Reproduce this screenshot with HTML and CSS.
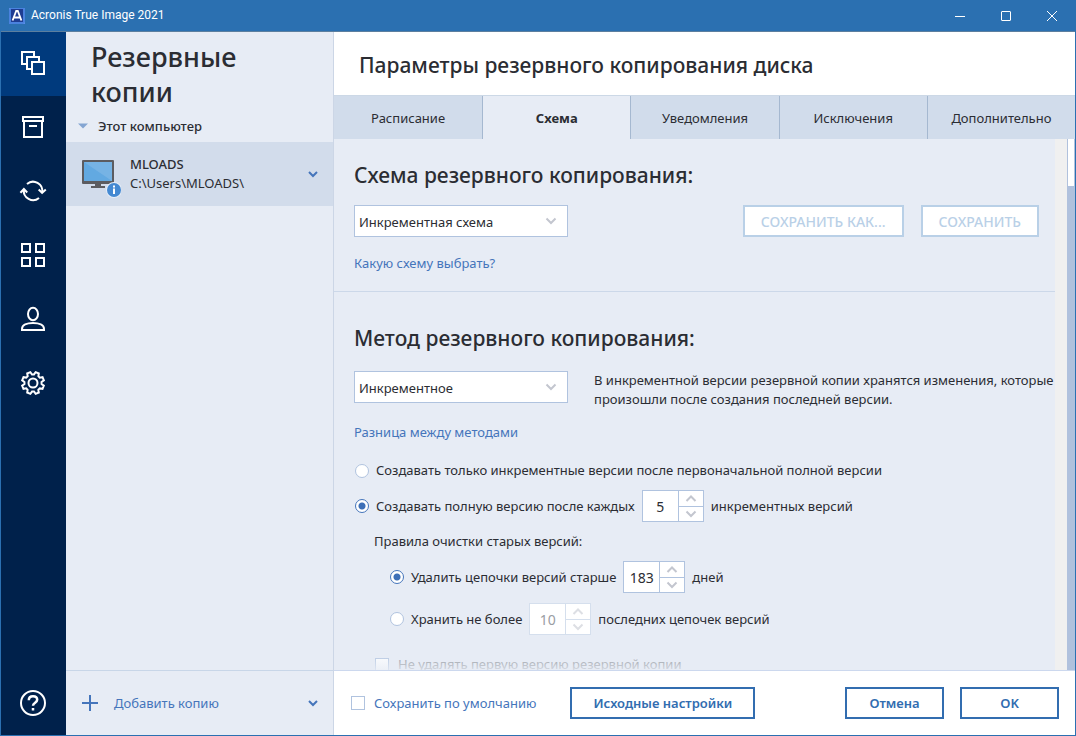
FILE: index.html
```html
<!DOCTYPE html>
<html lang="ru">
<head>
<meta charset="utf-8">
<title>Acronis True Image 2021</title>
<link rel="stylesheet" href="styles.css">
</head>
<body>
<div class="window">
  <header class="titlebar">
    <svg class="app-logo" width="16" height="16" viewBox="0 0 16 16" aria-hidden="true">
      <rect width="16" height="16" fill="#5b8fe8"/>
      <path d="M2 0H16V14L14 16H0V2Z" fill="#4a82de"/>
      <rect x="2" y="1" width="12" height="13" fill="#1f3d92"/>
      <path d="M3.6 12.5 7.2 3h1.6l3.6 9.500M5.200 9.500h5.600" fill="none" stroke="#fff" stroke-width="1.800"/>
    </svg>
    <span class="app-name">Acronis True Image 2021</span>
    <div class="window-controls">
      <button class="window-button" type="button" aria-label="Свернуть"><svg width="12" height="12" viewBox="0 0 12 12"><path d="M1 6.500h10"/></svg></button>
      <button class="window-button" type="button" aria-label="Развернуть"><svg width="12" height="12" viewBox="0 0 12 12"><rect x="1.500" y="1.500" width="9" height="9" rx="0.500"/></svg></button>
      <button class="window-button" type="button" aria-label="Закрыть"><svg width="12" height="12" viewBox="0 0 12 12"><path d="m1 1 10 10M11 1 1 11"/></svg></button>
    </div>
  </header>

  <div class="workspace">
    <nav class="rail" aria-label="Разделы">
      <button class="rail-button rail-button-active" type="button" aria-label="Резервные копии"><svg width="28" height="28" viewBox="0 0 28 28"><path d="M8 15H3V3h12v5M13 20H8V8h12v5M13 13h12v12H13z"/></svg></button>
      <button class="rail-button" type="button" aria-label="Архив"><svg width="28" height="28" viewBox="0 0 28 28"><path d="M4 4h20v4H4zM5 8v16h18V8M10 13h8"/></svg></button>
      <button class="rail-button" type="button" aria-label="Синхронизация"><svg width="28" height="28" viewBox="0 0 28 28"><path d="M8 7a9.300 9.300 0 0 1 15.200 8.500M19.700 12.500l3.400 3.400 3.700-3.400M20 21A9.300 9.300 0 0 1 4.900 12.500M1.400 15.700l3.500-3.700L8.200 15.500"/></svg></button>
      <button class="rail-button" type="button" aria-label="Инструменты"><svg width="28" height="28" viewBox="0 0 28 28"><path d="M3 3h8v8H3zM17 3h8v8h-8zM3 17h8v8H3zM17 17h8v8h-8z"/></svg></button>
      <button class="rail-button" type="button" aria-label="Учетная запись"><svg width="28" height="28" viewBox="0 0 28 28"><ellipse cx="14" cy="9" rx="5" ry="6.200"/><path d="M3 25v-1c0-4 5-6 11-6s11 2 11 6v1z"/></svg></button>
      <button class="rail-button" type="button" aria-label="Настройки"><svg width="28" height="28" viewBox="0 0 28 28"><circle cx="14" cy="14" r="4.500"/><path transform="rotate(22.5 14 14)" d="M12.300 3h3.400l.7 2.700 1.800.8 2.400-1.500 2.400 2.400-1.500 2.400.8 1.800 2.700.7v3.400l-2.700.7-.8 1.800 1.500 2.400-2.400 2.400-2.400-1.500-1.800.8-.7 2.700h-3.400l-.7-2.700-1.800-.8-2.400 1.500L5 20.600l1.500-2.400-.8-1.800-2.700-.7v-3.400l2.700-.7.8-1.800L5 7.400 7.400 5l2.400 1.500 1.800-.8z"/></svg></button>
      <button class="rail-button rail-help" type="button" aria-label="Справка"><svg width="28" height="28" viewBox="0 0 28 28"><circle cx="14" cy="14" r="12"/><path stroke-width="2.500" d="M9.800 11.200c0-2.400 1.700-3.900 4.200-3.900s4.200 1.400 4.200 3.500c0 2.900-4.200 2.900-4.200 5.900M14 19v2.500"/></svg></button>
    </nav>

    <aside class="sidebar">
      <h1 class="sidebar-title">Резервные копии</h1>
      <button class="group-toggle" type="button"><svg width="10" height="6" viewBox="0 0 10 6"><path d="M0 .5h10L5 5.500z" fill="#84a5d2"/></svg>Этот компьютер</button>
      <button class="backup-item" type="button">
        <svg class="backup-icon" width="40" height="48" viewBox="0 -8 40 48" aria-hidden="true">
          <path d="M14 25h6v3h4v2H10v-2h4z" fill="#5c5c60"/>
          <rect x="1" y="2" width="32" height="24" rx="1" fill="#5c5c60"/>
          <rect x="3" y="4" width="28" height="19" fill="#62a9e1"/>
          <path d="M3 4h28v19z" fill="#76b3e4"/>
          <circle cx="33" cy="32" r="8" fill="#e5edf8"/>
          <circle cx="33" cy="32" r="7" fill="#4489d2"/>
          <path d="M32 30.500h2V36h-2zM32 27.500h2v2h-2z" fill="#fff"/>
        </svg>
        <span class="backup-text"><span class="backup-name">MLOADS</span><span>C:\Users\MLOADS\</span></span>
        <svg class="chevron-blue" width="10" height="7" viewBox="0 0 10 7"><path d="m1 1 4 4 4-4"/></svg>
      </button>
      <button class="add-backup" type="button">
        <svg class="plus" width="16" height="16" viewBox="0 0 16 16"><path d="M8 0v16M0 8h16"/></svg>
        <span>Добавить копию</span>
        <svg class="chevron-blue" width="10" height="7" viewBox="0 0 10 7"><path d="m1 1 4 4 4-4"/></svg>
      </button>
    </aside>

    <main class="main">
      <h2 class="page-title">Параметры резервного копирования диска</h2>
      <div class="tabs" role="tablist">
        <button class="tab" type="button" role="tab">Расписание</button>
        <button class="tab tab-active" type="button" role="tab" aria-selected="true">Схема</button>
        <button class="tab" type="button" role="tab">Уведомления</button>
        <button class="tab" type="button" role="tab">Исключения</button>
        <button class="tab" type="button" role="tab">Дополнительно</button>
      </div>

      <div class="scroll-area">
        <div class="scroll-content">
          <section class="section scheme">
            <h3 class="section-title" id="scheme-title">Схема резервного копирования:</h3>
            <div class="control-row">
              <div class="select-box">
                <select class="select" aria-labelledby="scheme-title"><option>Инкрементная схема</option></select>
                <svg class="select-chevron" width="12" height="8" viewBox="0 0 12 8"><path d="m1.500 1.500 4.500 4.500 4.500-4.500"/></svg>
              </div>
              <div class="scheme-actions">
                <button class="button" type="button" disabled>СОХРАНИТЬ КАК...</button>
                <button class="button" type="button" disabled>СОХРАНИТЬ</button>
              </div>
            </div>
            <a class="help-link" href="#scheme">Какую схему выбрать?</a>
          </section>

          <section class="section method">
            <h3 class="section-title" id="method-title">Метод резервного копирования:</h3>
            <div class="control-row">
              <div class="select-box">
                <select class="select" aria-labelledby="method-title"><option>Инкрементное</option></select>
                <svg class="select-chevron" width="12" height="8" viewBox="0 0 12 8"><path d="m1.500 1.500 4.500 4.500 4.500-4.500"/></svg>
              </div>
              <p class="method-note">В инкрементной версии резервной копии хранятся изменения, которые произошли после создания последней версии.</p>
            </div>
            <a class="help-link" href="#methods">Разница между методами</a>
            <div class="options">
              <div class="option">
                <input class="radio" type="radio" name="method" id="only-incremental">
                <label for="only-incremental">Создавать только инкрементные версии после первоначальной полной версии</label>
              </div>
              <div class="option">
                <input class="radio" type="radio" name="method" id="full-after" checked>
                <label for="full-after">Создавать полную версию после каждых</label>
                <div class="spinner">
                  <input class="spinner-value" type="text" value="5" aria-label="Количество инкрементных версий">
                  <div class="spinner-buttons">
                    <button class="spinner-button" type="button" aria-label="Больше"><svg width="12" height="8" viewBox="0 0 12 8"><path d="m1.500 6 4.500-4.500L10.500 6"/></svg></button>
                    <button class="spinner-button" type="button" aria-label="Меньше"><svg width="12" height="8" viewBox="0 0 12 8"><path d="m1.500 1.500 4.500 4.500 4.500-4.500"/></svg></button>
                  </div>
                </div>
                <span>инкрементных версий</span>
              </div>
              <p class="rules-title">Правила очистки старых версий:</p>
              <div class="option option-nested">
                <input class="radio" type="radio" name="cleanup" id="older-than" checked>
                <label for="older-than">Удалить цепочки версий старше</label>
                <div class="spinner">
                  <input class="spinner-value" type="text" value="183" aria-label="Количество дней">
                  <div class="spinner-buttons">
                    <button class="spinner-button" type="button" aria-label="Больше"><svg width="12" height="8" viewBox="0 0 12 8"><path d="m1.500 6 4.500-4.500L10.500 6"/></svg></button>
                    <button class="spinner-button" type="button" aria-label="Меньше"><svg width="12" height="8" viewBox="0 0 12 8"><path d="m1.500 1.500 4.500 4.500 4.500-4.500"/></svg></button>
                  </div>
                </div>
                <span>дней</span>
              </div>
              <div class="option option-nested">
                <input class="radio" type="radio" name="cleanup" id="no-more-than">
                <label for="no-more-than">Хранить не более</label>
                <div class="spinner spinner-disabled">
                  <input class="spinner-value" type="text" value="10" aria-label="Количество цепочек" disabled>
                  <div class="spinner-buttons">
                    <button class="spinner-button" type="button" aria-label="Больше" disabled><svg width="12" height="8" viewBox="0 0 12 8"><path d="m1.500 6 4.500-4.500L10.500 6"/></svg></button>
                    <button class="spinner-button" type="button" aria-label="Меньше" disabled><svg width="12" height="8" viewBox="0 0 12 8"><path d="m1.500 1.500 4.500 4.500 4.500-4.500"/></svg></button>
                  </div>
                </div>
                <span>последних цепочек версий</span>
              </div>
              <div class="option option-keep-first">
                <input class="checkbox" type="checkbox" id="keep-first" disabled>
                <label for="keep-first">Не удалять первую версию резервной копии</label>
              </div>
            </div>
          </section>
          <div class="fade"></div>
        </div>
        <div class="scroll-gutter"></div>
        <div class="scroll-track"><div class="scroll-thumb"></div></div>
      </div>

      <footer class="footer">
        <div class="option default-option">
          <input class="checkbox" type="checkbox" id="save-default">
          <label for="save-default">Сохранить по умолчанию</label>
        </div>
        <button class="button button-reset" type="button">Исходные настройки</button>
        <div class="footer-actions">
          <button class="button" type="button">Отмена</button>
          <button class="button" type="button">OK</button>
        </div>
      </footer>
    </main>
  </div>
</div>
</body>
</html>
```

FILE: styles.css
```css
* {
  box-sizing: border-box;
}

body {
  margin: 0;
  color: #2b2d33;
  font: 13px/19px "Noto Sans", "Open Sans", sans-serif;
}

h1, h2, h3, p {
  margin: 0;
}

h1, h2, h3 {
  font-weight: 500;
}

button, input, select {
  margin: 0;
  padding: 0;
  border: 0;
  border-radius: 0;
  background: none;
  color: inherit;
  font: inherit;
}

svg {
  display: block;
  flex: none;
}

.window {
  display: flex;
  flex-direction: column;
  height: 100vh;
  border: solid #2b70b1;
  border-width: 0 1px 1px;
  background: #fff;
}

/* Title bar */

.titlebar {
  display: flex;
  flex: none;
  align-items: center;
  gap: 6px;
  height: 32px;
  padding-left: 8px;
  border-bottom: 1px solid #5c7f9f;
  background: #2b70b1;
  color: #fff;
  font-family: Roboto, "Noto Sans", sans-serif;
  font-size: 12px;
}

.window-controls {
  display: flex;
  align-self: stretch;
  margin-left: auto;
}

.window-button {
  display: grid;
  place-items: center;
  width: 46px;
}

.window-button svg {
  fill: none;
  stroke: #fff;
}

.workspace {
  display: flex;
  flex: 1;
  min-height: 0;
}

/* Section rail */

.rail {
  display: flex;
  flex: none;
  flex-direction: column;
  width: 65px;
  background: #00214b;
}

.rail-button {
  display: grid;
  place-items: center;
  flex: none;
  height: 64px;
  padding: 0 1px 2px 0;
}

.rail-button-active {
  background: #003a7d;
}

.rail-button svg {
  fill: none;
  stroke: #fff;
  stroke-width: 2;
}

.rail-help {
  margin-top: auto;
  padding-bottom: 0;
}

/* Backup list */

.sidebar {
  display: flex;
  flex: none;
  flex-direction: column;
  width: 268px;
  border-right: 1px solid #ccd6e6;
  background: #e7ecf5;
}

.sidebar-title {
  padding: 7px 25px 0;
  font-size: 27px;
  line-height: 35px;
}

.group-toggle {
  display: flex;
  align-items: center;
  gap: 10px;
  height: 33px;
  padding: 1px 12px 0;
  font-weight: 500;
}

.backup-item {
  display: flex;
  align-items: center;
  gap: 9px;
  height: 64px;
  padding: 0 15px;
  background: #d2dceb;
  text-align: left;
}

.backup-text {
  display: flex;
  flex: 1;
  flex-direction: column;
}

.backup-name {
  font-weight: 500;
}

.chevron-blue {
  fill: none;
  stroke: #4575bb;
  stroke-width: 2;
}

.add-backup {
  display: flex;
  align-items: center;
  gap: 16px;
  height: 65px;
  margin-top: auto;
  padding: 0 15px 0 16px;
  border-top: 1px solid #c8d6e8;
  color: #4575bb;
}

.add-backup span {
  flex: 1;
  text-align: left;
}

.plus {
  stroke: #4575bb;
  stroke-width: 2;
}

/* Settings */

.main {
  display: flex;
  flex: 1;
  flex-direction: column;
  min-width: 0;
}

.page-title {
  flex: none;
  padding: 17px 25px 14px;
  font-size: 21px;
  line-height: 32px;
}

.tabs {
  display: grid;
  flex: none;
  grid-template-columns: repeat(5, 1fr);
  height: 44px;
  border-top: 1px solid #ccd8e6;
  background: #e7ecf5;
}

.tab {
  padding-top: 2px;
  background: #d1dceb;
}

.tab + .tab {
  border-left: 1px solid #a5b8d0;
}

.tab-active {
  background: #e7ecf5;
  font-weight: 700;
}

.scroll-area {
  display: flex;
  flex: 1;
  min-height: 0;
}

.scroll-content {
  position: relative;
  flex: 1;
  min-width: 0;
  overflow: hidden;
  background: #e7ecf5;
}

.scroll-gutter {
  width: 12px;
  background: #f0f0f0;
}

.scroll-track {
  width: 8px;
  padding: 0 1px;
  background: #b0c1dd;
}

.scroll-thumb {
  height: 47px;
  background: #fff;
}

.fade {
  position: absolute;
  right: 0;
  bottom: 0;
  left: 0;
  height: 18px;
  background: linear-gradient(rgba(231, 236, 245, 0), rgba(231, 236, 245, 0.8));
}

.section {
  padding-left: 20px;
}

.scheme {
  padding-top: 20px;
  padding-bottom: 18px;
  border-bottom: 1px solid #ccd8e9;
}

.method {
  padding-top: 30px;
}

.section-title {
  margin-bottom: 14px;
  font-size: 21px;
  line-height: 32px;
}

.method .section-title {
  margin-bottom: 17px;
}

.control-row {
  display: flex;
  gap: 26px;
  height: 32px;
}

.select-box {
  position: relative;
  flex: none;
  width: 214px;
}

.select {
  width: 100%;
  height: 32px;
  padding: 2px 30px 0 4px;
  border: 1px solid #b0c3df;
  background: #fff;
  appearance: none;
}

.select-chevron {
  position: absolute;
  top: 12px;
  right: 11px;
  fill: none;
  stroke: #c3c6cf;
  stroke-width: 2;
}

.scheme-actions {
  display: flex;
  gap: 17px;
  margin-left: auto;
  padding-right: 16px;
}

.button {
  height: 32px;
  padding: 0 16px;
  border: 2px solid #326db0;
  background: #fff;
  color: #326db0;
  font-weight: 600;
}

.button:disabled {
  border-color: #b9d0e7;
  color: #b9d0e7;
  font-size: 14px;
  font-weight: 500;
}

.help-link {
  display: block;
  width: fit-content;
  margin-top: 17px;
  color: #4575bb;
  text-decoration: none;
}

.method .help-link {
  margin-top: 20px;
}

.options {
  display: flex;
  flex-direction: column;
  gap: 10px;
  margin-top: 19px;
}

.option {
  display: flex;
  align-items: center;
  gap: 7px;
  white-space: nowrap;
}

.option-nested {
  padding-left: 36px;
}

.rules-title {
  padding-left: 20px;
}

.option-keep-first {
  gap: 9px;
  margin-top: 10px;
  padding-left: 21px;
  color: #85898f;
}

.radio,
.checkbox {
  flex: none;
  width: 14px;
  height: 14px;
  border: 1px solid #b0c3df;
  background: #fff;
  appearance: none;
}

.radio {
  margin-left: 1px;
  border-radius: 50%;
}

.option-nested .radio {
  margin-left: 0;
}

.radio:checked {
  border: 1px solid #4575bb;
  background: radial-gradient(circle, #3d6fb7 3px, #fff 4px);
}

.spinner {
  display: flex;
  flex: none;
  width: 62px;
  height: 32px;
  border: 1px solid #b0c3df;
  background: #fff;
}

.spinner-value {
  width: 35px;
  font-size: 14px;
  text-align: center;
}

.spinner-buttons {
  display: grid;
  flex: 1;
  grid-template-rows: 1fr 1fr;
  border-left: 1px solid #b0c3df;
}

.spinner-button {
  display: grid;
  place-items: center;
}

.spinner-button + .spinner-button {
  border-top: 1px solid #b0c3df;
}

.spinner-button svg {
  fill: none;
  stroke: #c3c6cf;
  stroke-width: 2;
}

.spinner-disabled,
.spinner-disabled .spinner-buttons,
.spinner-disabled .spinner-button {
  border-color: #d5dfed;
  color: #9a9da3;
}

.spinner-disabled .spinner-button + .spinner-button {
  border-color: #d5dfed;
}

.spinner-disabled .spinner-button svg {
  stroke: #dddfe4;
}

/* Bottom bar */

.footer {
  display: flex;
  flex: none;
  align-items: center;
  height: 65px;
  padding: 0 16px 0 17px;
  border-top: 1px solid #ccd8ee;
}

.default-option {
  gap: 9px;
  color: #4575bb;
}

.button-reset {
  width: 185px;
  margin-left: 34px;
}

.footer-actions {
  display: flex;
  gap: 16px;
  margin-left: auto;
}

.footer-actions .button {
  width: 99px;
}
```
